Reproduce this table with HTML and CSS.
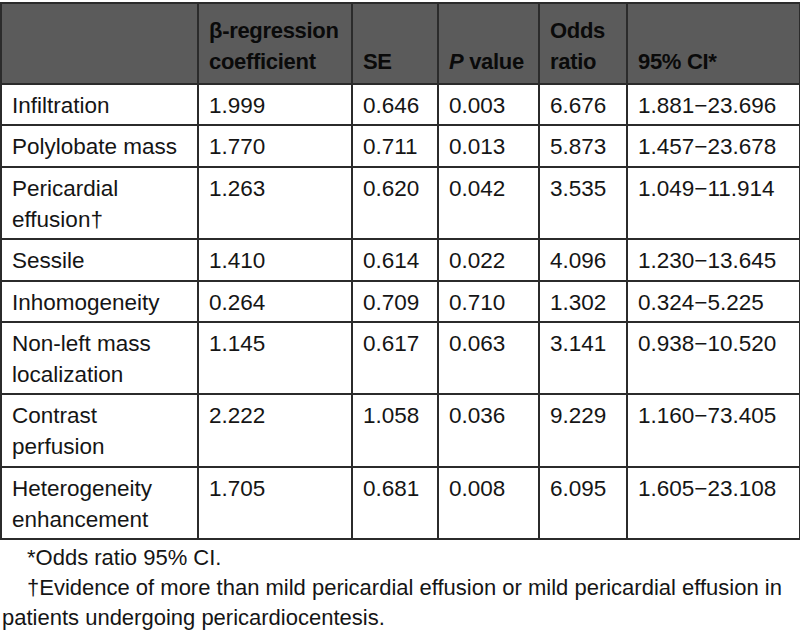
FILE: index.html
```html
<!DOCTYPE html>
<html lang="en">
<head>
<meta charset="utf-8">
<title>Regression table</title>
<link rel="stylesheet" href="styles.css">
</head>
<body>
<table class="data">
  <colgroup>
    <col class="c1"><col class="c2"><col class="c3"><col class="c4"><col class="c5"><col class="c6">
  </colgroup>
  <thead>
    <tr>
      <th></th>
      <th><span class="nw">β-regression</span> coefficient</th>
      <th>SE</th>
      <th><span class="nw"><i>P</i> value</span></th>
      <th>Odds ratio</th>
      <th>95% CI*</th>
    </tr>
  </thead>
  <tbody>
    <tr><td>Infiltration</td><td>1.999</td><td>0.646</td><td>0.003</td><td>6.676</td><td>1.881−23.696</td></tr>
    <tr><td>Polylobate mass</td><td>1.770</td><td>0.711</td><td>0.013</td><td>5.873</td><td>1.457−23.678</td></tr>
    <tr><td>Pericardial effusion†</td><td>1.263</td><td>0.620</td><td>0.042</td><td>3.535</td><td>1.049−11.914</td></tr>
    <tr><td>Sessile</td><td>1.410</td><td>0.614</td><td>0.022</td><td>4.096</td><td>1.230−13.645</td></tr>
    <tr><td>Inhomogeneity</td><td>0.264</td><td>0.709</td><td>0.710</td><td>1.302</td><td>0.324−5.225</td></tr>
    <tr><td>Non-left mass localization</td><td>1.145</td><td>0.617</td><td>0.063</td><td>3.141</td><td>0.938−10.520</td></tr>
    <tr><td>Contrast perfusion</td><td>2.222</td><td>1.058</td><td>0.036</td><td>9.229</td><td>1.160−73.405</td></tr>
    <tr><td>Heterogeneity enhancement</td><td>1.705</td><td>0.681</td><td>0.008</td><td>6.095</td><td>1.605−23.108</td></tr>
  </tbody>
</table>
<div class="notes">
  <p>*Odds ratio 95% CI.</p>
  <p>†Evidence of more than mild pericardial effusion or mild pericardial effusion in patients undergoing pericardiocentesis.</p>
</div>
</body>
</html>
```
FILE: styles.css
```css
html, body {
  margin: 0;
  padding: 0;
  background: #ffffff;
}
body {
  font-family: "Liberation Sans", Arial, Helvetica, sans-serif;
  font-size: 22px;
  color: #151515;
}
.data {
  border-collapse: collapse;
  table-layout: fixed;
  width: 799px;
  margin: 2px 0 0 0;
  border: 2px solid #2b2b2b;
}
.c1 { width: 197px; }
.c2 { width: 154px; }
.c3 { width: 86px; }
.c4 { width: 101px; }
.c5 { width: 88px; }
.c6 { width: 173px; }
.data th,
.data td {
  border: 2px solid #2b2b2b;
  text-align: left;
  line-height: 31px;
  padding: 5px 10px 3.4px 10px;
  vertical-align: top;
}
.data td {
  font-size: 22.5px;
}
.data th {
  background: #5b5b5b;
  color: #0a0a0a;
  font-weight: bold;
  vertical-align: bottom;
  padding: 11px 6px 6px 10px;
  letter-spacing: -0.3px;
}
.data th .nw {
  white-space: nowrap;
}
.data th i {
  font-style: italic;
}
.notes {
  padding: 3px 0 0 2px;
}
.notes p {
  margin: 0;
  line-height: 30px;
  text-indent: 25px;
}
```
